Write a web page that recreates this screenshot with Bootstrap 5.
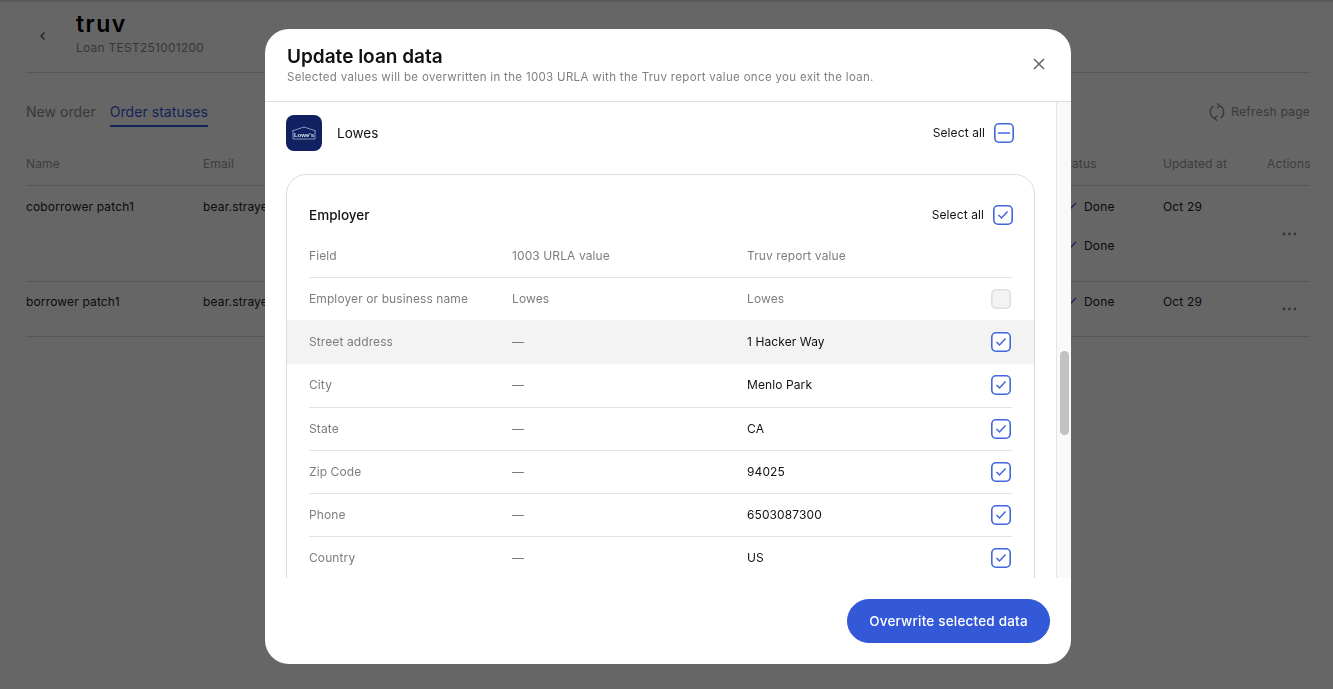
<!DOCTYPE html>
<html lang="en">
<head>
    <meta charset="UTF-8">
    <meta name="viewport" content="width=device-width, initial-scale=1.0">
    <title>Update loan data</title>
    <link rel="stylesheet" href="https://cdn.jsdelivr.net/npm/bootstrap@5.3.0/dist/css/bootstrap.min.css">
    <style>
        html, body { height: 100%; overflow: hidden; }
        body { font-family: Inter, "Liberation Sans", sans-serif; font-size: 13px; background: #fff; color: #1c1c1c; }

        /* page behind the dialog */
        .page-wrap { padding: 0 23px 0 26px; }
        .page-head { height: 73px; border-bottom: 1px solid #d9d9d9; padding-left: 13px; }
        .back-link { width: 37px; color: #555; margin-top: 8px; height: 56px; }
        .brand-logo { font-size: 23px; font-weight: 600; line-height: 27px; color: #000; letter-spacing: 1.5px; margin-top: 11px; }
        .loan-id { font-size: 12px; line-height: 16px; color: #8b8b8b; margin-top: 2px; letter-spacing: .25px; }
        .tabs-row { height: 54px; padding-top: 29px; }
        .tab-item { font-size: 14px; line-height: 20px; color: #8f8f8f; height: 25px; margin-right: 14px; letter-spacing: .05px; }
        .tab-item.is-on { color: #3358d8; border-bottom: 2px solid #3358d8; }
        .refresh-link { color: #8f8f8f; font-size: 12px; line-height: 20px; letter-spacing: .25px; gap: 5px; }
        .orders { table-layout: fixed; width: 100%; margin-top: 19px; border-collapse: collapse; }
        .orders th { font-weight: 400; color: #9a9a9a; font-size: 12px; height: 39px; padding: 0 0 2px; border-bottom: 1px solid #d9d9d9; letter-spacing: .15px; }
        .orders td { padding: 11px 0 25px; line-height: 20px; font-size: 12px; vertical-align: top; border-bottom: 1px solid #d9d9d9; letter-spacing: .15px; }
        .orders tr.short-row td { padding: 10px 0 24px; }
        .orders tr td.act-cell { vertical-align: middle; padding: 0; text-align: right; }
        .status-line { height: 20px; }
        .status-line + .status-line { margin-top: 19px; }
        .status-line svg { margin-right: 7px; margin-left: 5px; }
        .more-dots { padding-right: 13px; }

        /* dialog */
        .dim-layer { position: fixed; inset: 0; background: rgba(0, 0, 0, .6); }
        .dim-top { position: fixed; left: 0; right: 0; top: 0; height: 2px; background: rgba(0, 0, 0, .12); }
        .loan-dialog { position: fixed; left: 265px; top: 29px; width: 806px; height: 635px; border-radius: 24px; background: #fff; overflow: hidden; }
        .dlg-head { height: 73px; padding: 16px 22px 0; border-bottom: 1px solid #dedede; }
        .dlg-title { font-size: 19px; line-height: 24px; font-weight: 600; color: #111; margin: 0; }
        .dlg-sub { font-size: 11.5px; line-height: 16px; color: #808080; margin: 0; letter-spacing: .32px; }
        .dlg-close { padding: 0; border: 0; background: none; margin: 12px 3px 0 0; line-height: 0; }
        .dlg-main { height: 476px; }
        .dlg-scroll { overflow: hidden; padding: 13px 21px 0; }
        .scroll-track { width: 15px; background: #f9f9f9; border-left: 1px solid #e4e4e4; }
        .scroll-thumb { width: 9px; height: 84px; margin: 249px 0 0 3px; border-radius: 5px; background: #c1c1c1; }
        .lender-logo { width: 36px; height: 36px; border-radius: 8px; background: #0f2160; margin-right: 15px; }
        .lender-name { font-size: 13.5px; color: #111; }
        .lender-pick { padding-right: 21px; }
        .pick-label { font-size: 12px; color: #111; margin-right: 9px; letter-spacing: .1px; }
        .tick-box { width: 20px; height: 20px; flex: none; box-shadow: inset 0 0 0 1.6px #4266dd; border-radius: 5px; background: #fff; }
        .tick-box.is-off { box-shadow: inset 0 0 0 1.6px #e0e0e0; background: #f3f3f3; }
        .tick-box svg { display: block; margin: auto; }
        .emp-card { margin-top: 23px; border: 1px solid #dcdcdc; border-radius: 20px; padding: 29px 0 30px; }
        .emp-top { padding: 0 21px 0 22px; height: 22px; }
        .emp-title { font-size: 13.5px; font-weight: 500; color: #111; }
        .url-row { padding: 0 22px; }
        .url-cells { display: grid; grid-template-columns: 203px 235px 1fr 21px; align-items: center; height: 43.2px; border-bottom: 1px solid #e2e2e2; font-size: 12px; letter-spacing: .1px; color: #7d7d7d; }
        .url-row.head-row { margin-top: 8px; }
        .url-row.head-row .url-cells { height: 44px; }
        .url-row.is-hover { background: #f3f3f3; margin-top: -1px; }
        .url-row.is-hover .url-cells { height: 44.2px; }
        .url-val { color: #111; }
        .dlg-foot { height: 86px; padding: 21px 21px 0 0; }
        .save-btn { background: #3358d8; border-color: #3358d8; color: #fff; font-size: 13.5px; font-weight: 500; height: 44px; width: 203px; padding: 1px 0 0; letter-spacing: .2px; }
    </style>
</head>
<body>

<!-- Page behind -->
<div class="page-wrap">
    <div class="page-head d-flex align-items-start">
        <div class="back-link d-flex align-items-center">
            <svg width="8" height="10" viewBox="0 0 8 10"><path d="M5.5 1.5 2 5l3.5 3.5" fill="none" stroke="#4a4a4a" stroke-width="1.3"/></svg>
        </div>
        <div>
            <div class="brand-logo">truv</div>
            <div class="loan-id">Loan TEST251001200</div>
        </div>
    </div>
    <div class="tabs-row d-flex align-items-start">
        <div class="tab-item">New order</div>
        <div class="tab-item is-on">Order statuses</div>
        <div class="refresh-link ms-auto d-flex align-items-center">
            <svg width="18" height="20" viewBox="0 0 18 20" fill="none" stroke="#8f8f8f" stroke-width="1.4"><path d="M11.5 3.700A7 7 0 0 1 12.500 16"/><path d="M6.500 16.300A7 7 0 0 1 5.500 4"/><path d="M9 1.200l2.700 2.500L9 6" /><path d="M9 14l-2.700 2.400L9 18.800"/></svg>
            Refresh page
        </div>
    </div>
    <table class="orders">
        <colgroup>
            <col style="width:177px"><col><col style="width:103px"><col style="width:104px"><col style="width:43px">
        </colgroup>
        <thead>
            <tr><th>Name</th><th>Email</th><th>Status</th><th>Updated at</th><th class="text-end">Actions</th></tr>
        </thead>
        <tbody>
            <tr>
                <td>coborrower patch1</td>
                <td>bear.strayer</td>
                <td>
                    <div class="status-line d-flex align-items-center"><svg width="12" height="10" viewBox="0 0 12 10"><path d="M1 5l3 3 7-7" fill="none" stroke="#3358d8" stroke-width="1.3"/></svg>Done</div>
                    <div class="status-line d-flex align-items-center"><svg width="12" height="10" viewBox="0 0 12 10"><path d="M1 5l3 3 7-7" fill="none" stroke="#3358d8" stroke-width="1.3"/></svg>Done</div>
                </td>
                <td>Oct 29</td>
                <td class="act-cell"><svg class="more-dots" width="28" height="4" viewBox="0 0 15 4" fill="#8a8a8a"><circle cx="2" cy="2" r="1.4"/><circle cx="7.5" cy="2" r="1.4"/><circle cx="13" cy="2" r="1.4"/></svg></td>
            </tr>
            <tr class="short-row">
                <td>borrower patch1</td>
                <td>bear.strayer</td>
                <td><div class="status-line d-flex align-items-center"><svg width="12" height="10" viewBox="0 0 12 10"><path d="M1 5l3 3 7-7" fill="none" stroke="#3358d8" stroke-width="1.3"/></svg>Done</div></td>
                <td>Oct 29</td>
                <td class="act-cell"><svg class="more-dots" width="28" height="4" viewBox="0 0 15 4" fill="#8a8a8a"><circle cx="2" cy="2" r="1.4"/><circle cx="7.5" cy="2" r="1.4"/><circle cx="13" cy="2" r="1.4"/></svg></td>
            </tr>
        </tbody>
    </table>
</div>

<div class="dim-layer"></div>
<div class="dim-top"></div>

<!-- Dialog -->
<div class="loan-dialog d-flex flex-column">
    <div class="dlg-head d-flex justify-content-between align-items-start">
        <div>
            <h5 class="dlg-title">Update loan data</h5>
            <p class="dlg-sub">Selected values will be overwritten in the 1003 URLA with the Truv report value once you exit the loan.</p>
        </div>
        <button class="dlg-close" type="button" aria-label="Close">
            <svg width="14" height="14" viewBox="0 0 14 14"><path d="M2 2l10 10M12 2 2 12" stroke="#6a6a6a" stroke-width="1.6" fill="none"/></svg>
        </button>
    </div>

    <div class="dlg-main d-flex">
        <div class="dlg-scroll flex-grow-1">
            <div class="d-flex align-items-center">
                <div class="lender-logo d-flex align-items-center justify-content-center">
                    <svg width="26" height="14" viewBox="0 0 26 14">
                        <path d="M1 5 13 1l12 4M2 5v8h22V5" fill="none" stroke="#aab6d6" stroke-width=".8"/>
                        <text x="13" y="11" text-anchor="middle" font-family="Liberation Sans, sans-serif" font-size="6" font-weight="700" fill="#dfe5f5">Lowe's</text>
                    </svg>
                </div>
                <div class="lender-name">Lowes</div>
                <div class="lender-pick ms-auto d-flex align-items-center">
                    <span class="pick-label">Select all</span>
                    <span class="tick-box d-flex align-items-center"><svg width="12" height="2" viewBox="0 0 12 2"><path d="M0 1h12" stroke="#4266dd" stroke-width="1.5"/></svg></span>
                </div>
            </div>

            <div class="emp-card">
                <div class="emp-top d-flex align-items-center justify-content-between">
                    <span class="emp-title">Employer</span>
                    <div class="d-flex align-items-center">
                        <span class="pick-label">Select all</span>
                        <span class="tick-box d-flex align-items-center"><svg width="12" height="10" viewBox="0 0 12 10"><path d="M1.500 5l3 3 6-6.500" fill="none" stroke="#4266dd" stroke-width="1.5"/></svg></span>
                    </div>
                </div>
                <div class="url-row head-row"><div class="url-cells"><span>Field</span><span>1003 URLA value</span><span>Truv report value</span><span></span></div></div>
                <div class="url-row"><div class="url-cells"><span>Employer or business name</span><span>Lowes</span><span>Lowes</span><span class="tick-box is-off"></span></div></div>
                <div class="url-row is-hover"><div class="url-cells border-0"><span>Street address</span><span>—</span><span class="url-val">1 Hacker Way</span><span class="tick-box d-flex align-items-center"><svg width="12" height="10" viewBox="0 0 12 10"><path d="M1.500 5l3 3 6-6.500" fill="none" stroke="#4266dd" stroke-width="1.5"/></svg></span></div></div>
                <div class="url-row"><div class="url-cells"><span>City</span><span>—</span><span class="url-val">Menlo Park</span><span class="tick-box d-flex align-items-center"><svg width="12" height="10" viewBox="0 0 12 10"><path d="M1.500 5l3 3 6-6.500" fill="none" stroke="#4266dd" stroke-width="1.5"/></svg></span></div></div>
                <div class="url-row"><div class="url-cells"><span>State</span><span>—</span><span class="url-val">CA</span><span class="tick-box d-flex align-items-center"><svg width="12" height="10" viewBox="0 0 12 10"><path d="M1.500 5l3 3 6-6.500" fill="none" stroke="#4266dd" stroke-width="1.5"/></svg></span></div></div>
                <div class="url-row"><div class="url-cells"><span>Zip Code</span><span>—</span><span class="url-val">94025</span><span class="tick-box d-flex align-items-center"><svg width="12" height="10" viewBox="0 0 12 10"><path d="M1.500 5l3 3 6-6.500" fill="none" stroke="#4266dd" stroke-width="1.5"/></svg></span></div></div>
                <div class="url-row"><div class="url-cells"><span>Phone</span><span>—</span><span class="url-val">6503087300</span><span class="tick-box d-flex align-items-center"><svg width="12" height="10" viewBox="0 0 12 10"><path d="M1.500 5l3 3 6-6.500" fill="none" stroke="#4266dd" stroke-width="1.5"/></svg></span></div></div>
                <div class="url-row"><div class="url-cells"><span>Country</span><span>—</span><span class="url-val">US</span><span class="tick-box d-flex align-items-center"><svg width="12" height="10" viewBox="0 0 12 10"><path d="M1.500 5l3 3 6-6.500" fill="none" stroke="#4266dd" stroke-width="1.5"/></svg></span></div></div>
            </div>
        </div>
        <div class="scroll-track flex-shrink-0"><div class="scroll-thumb"></div></div>
    </div>

    <div class="dlg-foot d-flex justify-content-end">
        <button class="btn btn-primary rounded-pill save-btn" type="button">Overwrite selected data</button>
    </div>
</div>

<script src="https://cdn.jsdelivr.net/npm/bootstrap@5.3.0/dist/js/bootstrap.bundle.min.js"></script>
</body>
</html>
